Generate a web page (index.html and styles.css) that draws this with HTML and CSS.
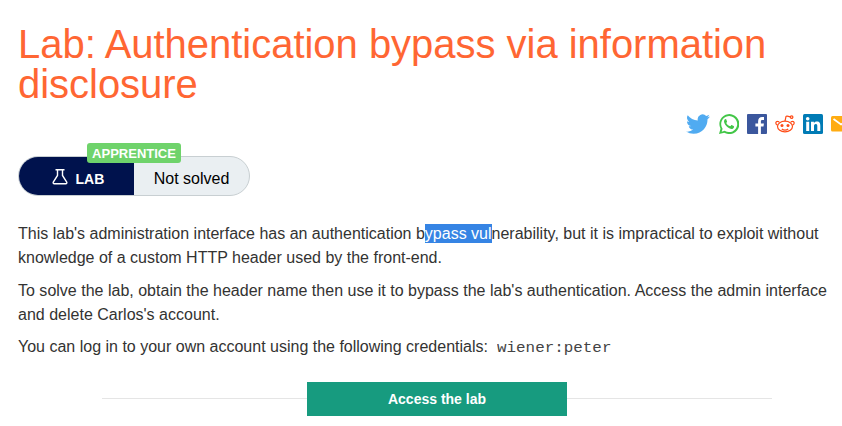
FILE: index.html
```html
<!DOCTYPE html>
<html lang="en">
<head>
<meta charset="utf-8">
<title>Lab: Authentication bypass via information disclosure</title>
<link rel="stylesheet" href="styles.css">
</head>
<body>
<main class="page">
<h1>Lab: Authentication bypass via information disclosure</h1>
<div class="share">
<svg class="twitter" viewBox="0 0 24 24" fill="#50abf1"><path d="M24 4.600a10 10 0 0 1-2.800.8 4.900 4.900 0 0 0 2.100-2.700c-.9.500-2 1-3.100 1.200a4.920 4.920 0 0 0-8.400 4.500C7.700 8.200 4.100 6.200 1.700 3.200a4.900 4.900 0 0 0 1.500 6.600c-.8 0-1.600-.2-2.200-.6v.1a4.900 4.900 0 0 0 3.900 4.800 5 5 0 0 1-2.200.1 4.900 4.900 0 0 0 4.600 3.400A9.900 9.900 0 0 1 0 19.600 14 14 0 0 0 7.500 21.800c9.100 0 14-7.500 14-14v-.6A10 10 0 0 0 24 4.600z"/></svg>
<svg viewBox="2 2 20 20" fill="#43c648"><path fill-rule="evenodd" d="M2 22l1.500-5.300A10 10 0 1 1 7.300 20.700zM7.600 18.700l.5.300a8 8 0 1 0-2.800-2.800l.3.500-.9 3z"/><path d="M8.500 7c-.3 0-1.500.8-1.500 2.500 0 2 2 4.500 4 6 2 1.400 4.500 2.300 5.800.2.300-.8.300-1.400.2-1.500l-2.300-1.200c-.3-.1-.6.100-1.300 1.200-2-.5-3.600-2.200-4.100-3.300l.8-1.200L9.200 7.300z"/></svg>
<svg viewBox="0 0 20 20"><rect width="20" height="20" rx="1" fill="#3b579d"/><path fill="#fff" d="M13.600 20v-7.500h-2.700v-3h2.700V7.200c0-2.700 1.600-4.200 4-4.200.9 0 1.500.1 1.900.1V6h-1.600c-1.300 0-1.500.6-1.500 1.500v2h3l-.4 3h-2.600V20z" transform="translate(-2.500)"/></svg>
<svg viewBox="0 0 20 20" fill="none" stroke="#ff4b16" stroke-width="1.200"><ellipse cx="10" cy="12.500" rx="7.500" ry="5.300"/><path d="M10 7.200l.9-4.200c.1-.9.600-1.100 1.300-.9l3 .8M2.500 11.300C-.3 9.600.9 7.200 2.600 7.400c.7 0 1.200.3 1.700.7M17.500 11.300c2.800-1.700 1.600-4.100-.1-3.900-.7 0-1.200.3-1.700.7M6.800 14.900c1.700 1.200 4.700 1.200 6.400 0"/><circle cx="16.600" cy="3.100" r="1.300"/><circle cx="7" cy="11.400" r="1.500" fill="#ff4b16" stroke="none"/><circle cx="13" cy="11.400" r="1.500" fill="#ff4b16" stroke="none"/></svg>
<svg viewBox="0 0 20 20"><rect width="20" height="20" rx="1.500" fill="#007bb5"/><g fill="#fff"><circle cx="4.700" cy="4.700" r="1.800"/><path d="M3.200 7.700h3v9.300h-3zM8 7.700h2.900V9c.5-.9 1.500-1.600 3-1.600 2.900 0 3.400 1.900 3.400 4.500V17h-3v-4.500c0-1.200 0-2.500-1.500-2.500S11 11.200 11 12.500V17H8z"/></g></svg>
<svg viewBox="0 0 20 20"><rect y="2" width="20" height="15.500" rx="1.500" fill="#ffac12"/><path d="M2.500 5L10 10.500 17.500 5" fill="none" stroke="#fff" stroke-width="1.800"/></svg>
</div>
<div class="status">
<span class="level">APPRENTICE</span>
<div class="lab"><svg viewBox="0 0 16 18" fill="none" stroke="#fff" stroke-width="1.400"><path d="M3.500 1.700h9M5.500 2v5.500L1.300 14c-.5 1 0 1.800 1 1.800h11.400c1 0 1.500-.8 1-1.800L10.500 7.500V2"/></svg>LAB</div>
<div class="state">Not solved</div>
</div>
<p>This lab's administration interface has an authentication b<mark>ypass vul</mark>nerability, but it is impractical to exploit without knowledge of a custom HTTP header used by the front-end.</p>
<p class="task">To solve the lab, obtain the header name then use it to bypass the lab's authentication. Access the admin interface and delete Carlos's account.</p>
<p>You can log in to your own account using the following credentials: <code>wiener:peter</code></p>
<div class="access"><a class="button">Access the lab</a></div>
</main>
</body>
</html>
```
FILE: styles.css
```css
body {
  margin: 0;
  background: #fff;
  color: #333332;
  font: 16px/24px "Liberation Sans", Arial, sans-serif;
  overflow: hidden;
}
.page { padding: 24px 0 0 18px; }
h1 {
  margin: 0;
  color: #ff6633;
  font-size: 40px;
  line-height: 40px;
  font-weight: 400;
  letter-spacing: -0.025px;
}
.share {
  display: flex;
  align-items: center;
  gap: 8px;
  height: 24px;
  margin: 8px 0 0 668px;
}
.share svg { width: 20px; height: 20px; flex: none; }
.share .twitter { width: 24px; height: 24px; margin-right: 1px; }
.status {
  position: relative;
  display: flex;
  box-sizing: border-box;
  width: 232px;
  height: 40px;
  margin-top: 20px;
  border: 1px solid #c8cfd2;
  border-radius: 20px;
  background: #eaeff2;
}
.level {
  position: absolute;
  left: 68px;
  top: -14px;
  width: 94px;
  height: 20px;
  border-radius: 3px;
  background: #6fd36b;
  color: #fff;
  font: bold 13px/21px "Liberation Sans", Arial, sans-serif;
  text-align: center;
}
.lab {
  display: flex;
  align-items: center;
  gap: 7.500px;
  box-sizing: border-box;
  width: 115px;
  padding: 6px 0 0 33px;
  border-radius: 19px 0 0 19px;
  background: #00124d;
  color: #fff;
  font-size: 14px;
  font-weight: bold;
}
.lab svg { width: 16px; height: 18px; margin-top: -4px; }
.state { padding: 10px 0 0 19.700px; color: #000; }
p { margin: 0 0 8.500px; width: 815px; }
.status + p { margin-top: 26px; }
.task { letter-spacing: 0.008px; }
mark { padding: 1px 0; background: #3584e4; color: #fff; }
code {
  display: inline-block;
  margin-left: 5px;
  color: #444;
  font: 14px/16px "Liberation Mono", monospace;
  transform: scaleX(1.135);
  transform-origin: left;
}
.access {
  display: grid;
  grid-template-columns: 1fr 260px 1fr;
  align-items: center;
  width: 670px;
  margin: 23px 0 0 84px;
}
.access::before, .access::after {
  content: "";
  height: 1px;
  margin-bottom: 2px;
  background: #e5e5e5;
}
.button {
  height: 34px;
  background: #179b7f;
  color: #fff;
  font-size: 14px;
  font-weight: bold;
  line-height: 34px;
  text-align: center;
}
```
